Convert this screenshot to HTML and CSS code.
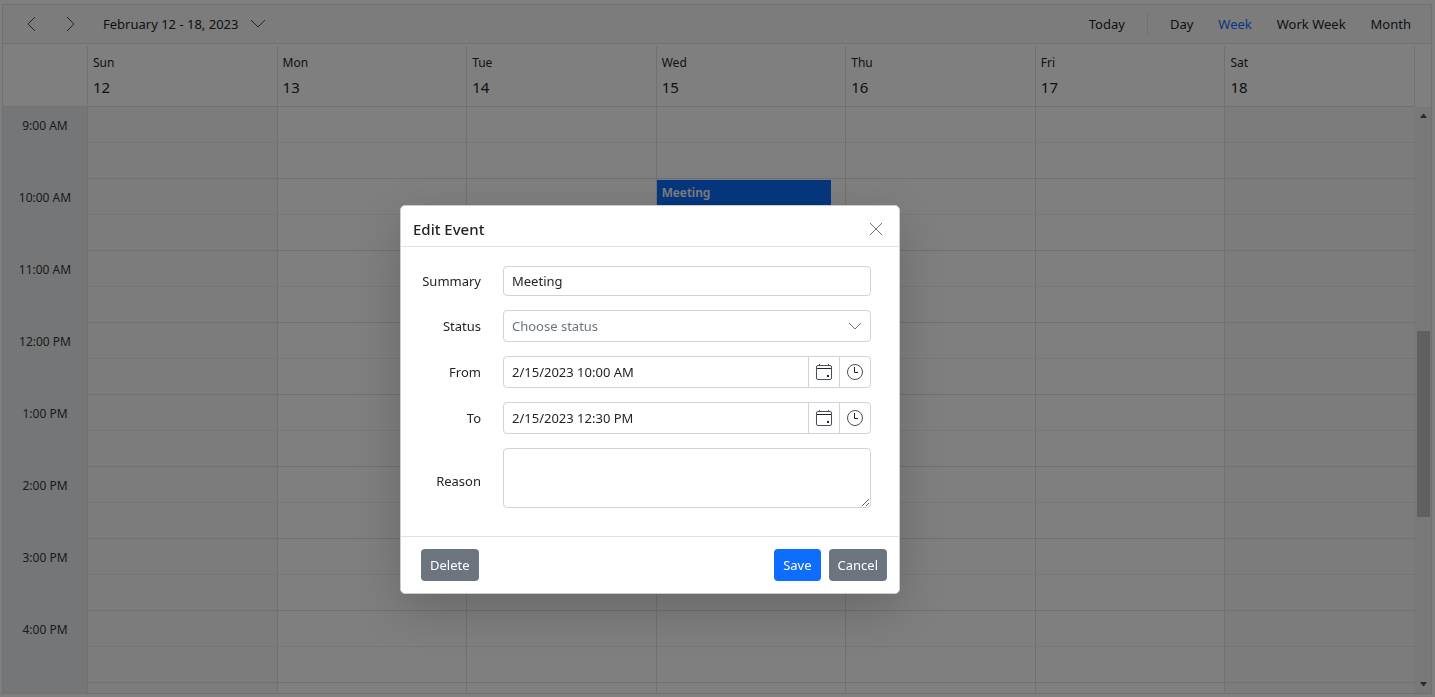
FILE: index.html
```html
<!DOCTYPE html>
<html lang="en">
<head>
<meta charset="UTF-8">
<meta name="viewport" content="width=device-width, initial-scale=1">
<title>Schedule</title>
<link rel="stylesheet" href="styles.css">
</head>
<body>
<div class="schedule">
  <!-- Toolbar -->
  <header class="toolbar">
    <button type="button" class="nav-btn" aria-label="Previous">
      <svg width="16" height="16" viewBox="0 0 16 16"><path d="M12 1L5 8l7 7"/></svg>
    </button>
    <button type="button" class="nav-btn" aria-label="Next">
      <svg width="16" height="16" viewBox="0 0 16 16"><path d="M4 1l7 7-7 7"/></svg>
    </button>
    <button type="button" class="date-range">
      February 12 - 18, 2023
      <svg width="16" height="16" viewBox="0 0 16 16"><path d="M1 4l7 7 7-7"/></svg>
    </button>
    <div class="views">
      <button type="button">Today</button>
      <span class="separator"></span>
      <button type="button">Day</button>
      <button type="button" class="active">Week</button>
      <button type="button">Work Week</button>
      <button type="button">Month</button>
    </div>
  </header>

  <!-- Day headers -->
  <div class="head">
    <table class="grid">
      <tr>
        <th class="time"></th>
        <th>Sun<span>12</span></th>
        <th>Mon<span>13</span></th>
        <th>Tue<span>14</span></th>
        <th>Wed<span>15</span></th>
        <th>Thu<span>16</span></th>
        <th>Fri<span>17</span></th>
        <th>Sat<span>18</span></th>
      </tr>
    </table>
  </div>

  <!-- Time slots -->
  <div class="content">
    <div class="slots">
      <table class="grid">
        <tr><th class="time" rowspan="2">9:00 AM</th><td></td><td></td><td></td><td></td><td></td><td></td><td></td></tr>
        <tr class="half"><td></td><td></td><td></td><td></td><td></td><td></td><td></td></tr>
        <tr><th class="time" rowspan="2">10:00 AM</th><td></td><td></td><td></td><td><div class="event">Meeting</div></td><td></td><td></td><td></td></tr>
        <tr class="half"><td></td><td></td><td></td><td></td><td></td><td></td><td></td></tr>
        <tr><th class="time" rowspan="2">11:00 AM</th><td></td><td></td><td></td><td></td><td></td><td></td><td></td></tr>
        <tr class="half"><td></td><td></td><td></td><td></td><td></td><td></td><td></td></tr>
        <tr><th class="time" rowspan="2">12:00 PM</th><td></td><td></td><td></td><td></td><td></td><td></td><td></td></tr>
        <tr class="half"><td></td><td></td><td></td><td></td><td></td><td></td><td></td></tr>
        <tr><th class="time" rowspan="2">1:00 PM</th><td></td><td></td><td></td><td></td><td></td><td></td><td></td></tr>
        <tr class="half"><td></td><td></td><td></td><td></td><td></td><td></td><td></td></tr>
        <tr><th class="time" rowspan="2">2:00 PM</th><td></td><td></td><td></td><td></td><td></td><td></td><td></td></tr>
        <tr class="half"><td></td><td></td><td></td><td></td><td></td><td></td><td></td></tr>
        <tr><th class="time" rowspan="2">3:00 PM</th><td></td><td></td><td></td><td></td><td></td><td></td><td></td></tr>
        <tr class="half"><td></td><td></td><td></td><td></td><td></td><td></td><td></td></tr>
        <tr><th class="time" rowspan="2">4:00 PM</th><td></td><td></td><td></td><td></td><td></td><td></td><td></td></tr>
        <tr class="half"><td></td><td></td><td></td><td></td><td></td><td></td><td></td></tr>
        <tr><th class="time"></th><td></td><td></td><td></td><td></td><td></td><td></td><td></td></tr>
      </table>
    </div>
    <div class="scrollbar">
      <svg width="7" height="4" viewBox="0 0 7 4"><path d="M0 4h7L4 0H3z"/></svg>
      <div class="track"><div class="thumb"></div></div>
      <svg width="7" height="4" viewBox="0 0 7 4"><path d="M0 0h7L4 4H3z"/></svg>
    </div>
  </div>
</div>

<div class="overlay"></div>

<!-- Edit dialog -->
<form class="dialog" role="dialog" aria-labelledby="dialogTitle">
  <div class="dialog-header">
    <h2 id="dialogTitle">Edit Event</h2>
    <button type="button" class="close" aria-label="Close">
      <svg width="14" height="14" viewBox="0 0 14 14"><path d="M1 1l12 12M13 1L1 13"/></svg>
    </button>
  </div>

  <div class="dialog-body">
    <label for="summary">Summary</label>
    <input type="text" id="summary" class="field summary" value="Meeting">

    <label for="status">Status</label>
    <div class="field">
      <select id="status">
        <option value="">Choose status</option>
      </select>
      <svg class="caret" width="14" height="14" viewBox="0 0 14 14"><path d="M1 4l6 6 6-6"/></svg>
    </div>

    <label for="from">From</label>
    <div class="field">
      <input type="text" id="from" value="2/15/2023 10:00 AM">
      <button type="button" aria-label="Choose start date">
        <svg width="18" height="18" viewBox="0 0 18 18"><rect x="1.5" y="2.5" width="15" height="14" rx="1.5"/><path class="dark" d="M2 5.5h14"/><path d="M4.5 1v2M13.5 1v2"/><path class="dot" d="M12 12h2v2h-2z"/></svg>
      </button>
      <button type="button" aria-label="Choose start time">
        <svg width="18" height="18" viewBox="0 0 18 18"><circle cx="9" cy="9" r="7.5"/><path class="dark" d="M8.5 4v5.500H12"/></svg>
      </button>
    </div>

    <label for="to">To</label>
    <div class="field">
      <input type="text" id="to" value="2/15/2023 12:30 PM">
      <button type="button" aria-label="Choose end date">
        <svg width="18" height="18" viewBox="0 0 18 18"><rect x="1.5" y="2.5" width="15" height="14" rx="1.5"/><path class="dark" d="M2 5.5h14"/><path d="M4.5 1v2M13.5 1v2"/><path class="dot" d="M12 12h2v2h-2z"/></svg>
      </button>
      <button type="button" aria-label="Choose end time">
        <svg width="18" height="18" viewBox="0 0 18 18"><circle cx="9" cy="9" r="7.5"/><path class="dark" d="M8.5 4v5.500H12"/></svg>
      </button>
    </div>

    <label for="reason" class="tall">Reason</label>
    <textarea id="reason" class="field"></textarea>
  </div>

  <div class="dialog-footer">
    <button type="button" class="btn delete">Delete</button>
    <button type="submit" class="btn primary">Save</button>
    <button type="button" class="btn">Cancel</button>
  </div>
</form>
</body>
</html>
```
FILE: styles.css
```css
* {
  box-sizing: border-box;
}
body {
  margin: 0;
  padding: 4px 3px 3px 2px;
  height: 100vh;
  overflow: hidden;
  font-family: 'Noto Sans', 'Open Sans', sans-serif;
  font-size: 13px;
  color: #212529;
  background: white;
}
button, input, select, textarea {
  font: inherit;
  color: inherit;
}
button {
  border: none;
  background: none;
  padding: 0;
  cursor: pointer;
}
svg {
  display: block;
  fill: none;
  stroke: #6c757d;
}
.schedule {
  display: flex;
  flex-direction: column;
  height: 100%;
  border: 1px solid #dee2e6;
}

/* Toolbar */
.toolbar {
  display: flex;
  align-items: center;
  height: 39px;
  flex-shrink: 0;
  background: #f8f9fa;
  border-bottom: 1px solid #dee2e6;
  padding: 0 8px;
}
.nav-btn {
  display: flex;
  justify-content: center;
  width: 40px;
}
.date-range {
  display: flex;
  align-items: center;
  gap: 12px;
  padding: 0 12px;
}
.toolbar svg {
  stroke: #495057;
}
.views {
  display: flex;
  align-items: center;
  gap: 1px;
  margin-left: auto;
}
.views button {
  padding: 0 12px;
}
.views .active {
  color: #0d6efd;
}
.separator {
  width: 1px;
  height: 24px;
  margin: 0 9px;
  background: #dee2e6;
}

/* Calendar tables */
.head {
  flex-shrink: 0;
  padding: 2px 16px 0 0;
}
.grid {
  width: 100%;
  table-layout: fixed;
  border-collapse: separate;
  border-spacing: 0;
}
.grid th {
  font-weight: 400;
}
.grid th, .grid td {
  border: solid #dee2e6;
  border-width: 0 1px 1px 0;
}
.grid .time {
  width: 85px;
}
.head th {
  height: 61px;
  padding: 7px 5px 0;
  text-align: left;
  vertical-align: top;
  font-size: 12px;
  line-height: 20px;
}
.head span {
  display: block;
  font-size: 15px;
  line-height: 28px;
}
.content {
  display: flex;
  flex: 1;
  min-height: 0;
}
.slots {
  flex: 1;
  overflow: hidden;
}
.slots td {
  position: relative;
  height: 36px;
  padding: 0;
  border-bottom-style: dotted;
}
.slots .half td {
  border-bottom-style: solid;
}
.slots td:nth-last-child(7), .slots td:last-child {
  background: #f8f9fa;
}
.slots td:last-child {
  border-right-width: 0;
}
.slots .time {
  padding: 0;
  vertical-align: top;
  line-height: 38px;
  font-size: 12px;
  color: #343a40;
  background: #e9ecef;
  border-bottom: none;
}
.event {
  position: absolute;
  top: 1px;
  left: 0;
  z-index: 1;
  width: calc(100% - 14px);
  height: 180px;
  padding: 0 5px;
  line-height: 26px;
  font-size: 12px;
  font-weight: 600;
  color: white;
  background: #0d6efd;
}
.scrollbar {
  display: flex;
  flex-direction: column;
  align-items: center;
  width: 16px;
  padding: 7px 0;
  background: #f1f1f1;
}
.scrollbar svg {
  fill: #505050;
  stroke: none;
}
.track {
  flex: 1;
  width: 13px;
}
.thumb {
  height: 33%;
  margin-top: 213px;
  background: #c1c1c1;
}

.overlay {
  position: fixed;
  inset: 0;
  z-index: 2;
  background: rgba(0,0,0,0.5);
}

/* Dialog */
.dialog {
  position: absolute;
  top: 205px;
  left: 400px;
  z-index: 3;
  width: 500px;
  background: white;
  border: 1px solid #ccc;
  border-radius: 5px;
  box-shadow: 0 16px 48px rgba(0,0,0,0.18);
}
.dialog-header {
  display: flex;
  align-items: center;
  justify-content: space-between;
  height: 41px;
  padding: 5px 16px 0 12px;
  border-bottom: 1px solid #dee2e6;
}
.dialog-header h2 {
  margin: 0;
  font-size: 15px;
  font-weight: 500;
}
.dialog-body {
  display: grid;
  grid-template-columns: 80px 1fr;
  align-items: center;
  gap: 14px 22px;
  padding: 19px 28px 28px 0;
}
.dialog-body label {
  text-align: right;
}
.dialog-body .tall {
  padding-top: 6px;
}
.field {
  display: flex;
  position: relative;
  width: 100%;
  height: 32px;
  border: 1px solid #ced4da;
  border-radius: 4px;
  overflow: hidden;
}
.field.summary {
  height: 30px;
  padding: 0 8px;
}
textarea.field {
  height: 60px;
  padding: 4px 8px;
  resize: vertical;
}
.field input, .field select {
  flex: 1;
  min-width: 0;
  padding: 0 8px;
  border: none;
  outline: none;
  background: none;
}
.field select {
  appearance: none;
  color: #6c757d;
}
.caret {
  position: absolute;
  top: 8px;
  right: 8px;
  pointer-events: none;
}
.field button {
  display: flex;
  align-items: center;
  justify-content: center;
  width: 31px;
  border-left: 1px solid #ced4da;
}
.field button svg {
  stroke: #495057;
}
.field .dark {
  stroke: #212529;
}
.field .dot {
  fill: #212529;
  stroke: none;
}
.dialog-footer {
  display: flex;
  gap: 8px;
  padding: 12px 12px 12px 20px;
  border-top: 1px solid #dee2e6;
}
.btn {
  height: 32px;
  padding: 0 9px;
  border-radius: 4px;
  color: white;
  background: #6c757d;
}
.btn.primary {
  background: #0d6efd;
}
.btn.delete {
  margin-right: auto;
}
```
